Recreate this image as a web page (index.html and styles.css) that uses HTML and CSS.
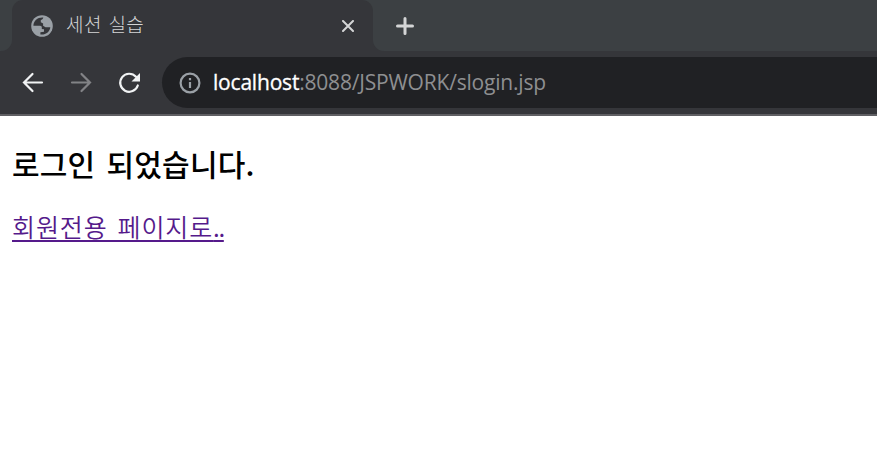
FILE: index.html
```html
<!DOCTYPE html>
<html lang="ko">
<head>
<meta charset="utf-8">
<title>세션 실습</title>
<link rel="stylesheet" href="styles.css">
</head>
<body>
<header class="browser">
  <div class="tabs">
    <div class="strip strip-left"></div>
    <div class="tab">
      <svg class="globe" viewBox="0 0 22 22"><circle cx="11" cy="11" r="10.8" fill="#9aa0a6"/><path fill="#35363a" d="M2.4 10.8C2.5 5.5 7 2 12.3 2.5c-.2 1.6-1.4 2.2-2.5 2.5v2.2l2.3 1.2v2.4l2.4 1.4h4.8c-.3 4.3-4.2 7.8-9.9 7.3v-2.2l3.6-.5v-2.5l-2.2-.4v-2.2c-1-1.2-2.2-.9-3.5-.9z"/></svg>
      <span class="tab-title">세션 실습</span>
      <svg class="close" viewBox="0 0 12 12"><path d="M1 1l10 10M11 1L1 11"/></svg>
    </div>
    <div class="strip strip-right">
      <svg class="plus" viewBox="0 0 18 18"><path d="M9 1.5v15M1.5 9h15"/></svg>
    </div>
  </div>
  <div class="toolbar">
    <svg class="nav" viewBox="0 0 22 22"><path d="M20 10.5H2M10.5 2L2 10.5l8.5 8.5"/></svg>
    <svg class="nav dim" viewBox="0 0 22 22"><path d="M2 10.5h18M11.5 2l8.5 8.5-8.5 8.5"/></svg>
    <svg class="nav" viewBox="0 0 22 22"><path d="M19.8 13.5A9 9 0 1 1 18 4.8"/><path class="tip" d="M22 1v8.5h-8.5z"/></svg>
    <div class="address">
      <svg class="info" viewBox="0 0 22 22"><circle cx="11" cy="11" r="9.4"/><path d="M11 10v6M11 6v2.2"/></svg>
      <span class="host">localhost</span><span class="path">:8088/JSPWORK/slogin.jsp</span>
    </div>
  </div>
</header>
<main>
  <h3>로그인 되었습니다.</h3>
  <a href="#">회원전용 페이지로<span class="dots">..</span></a>
</main>
</body>
</html>
```
FILE: styles.css
```css
* { box-sizing: border-box; }
body { margin: 0; height: 475px; overflow: hidden; background: #fff; font-family: "Noto Sans CJK KR", sans-serif; }
svg { display: block; flex: none; fill: none; stroke-linecap: round; }
.browser { height: 116px; background: #35363a; border-bottom: 2px solid #5f5f63; }
.tabs { display: flex; height: 51px; background: linear-gradient(#3c4043 0 20px, #35363a 20px); }
.strip { background: #3c4043; }
.strip-left { width: 12px; border-bottom-right-radius: 11px; }
.strip-right { flex: 1; border-bottom-left-radius: 11px; padding: 17px 0 0 23px; }
.tab { width: 361px; display: flex; align-items: center; padding-left: 19px; border-radius: 11px 11px 0 0; background: #35363a; }
.globe { width: 22px; height: 22px; stroke: none; }
.tab-title { margin-left: 13px; width: 276px; padding-bottom: 3px; font-size: 19px; font-weight: 300; line-height: 24px; letter-spacing: .4px; word-spacing: 1px; color: #d4d5d6; white-space: nowrap; }
.close { width: 12px; height: 12px; stroke: #d4d5d6; stroke-width: 2; }
.plus { width: 18px; height: 18px; stroke: #d4d5d6; stroke-width: 3; }
.toolbar { display: flex; align-items: center; height: 63px; padding-left: 22px; }
.nav { width: 22px; height: 22px; margin-right: 26px; stroke: #f1f3f4; stroke-width: 2.2; }
.dim { stroke: #828386; }
.tip { fill: #f1f3f4; stroke: none; }
.address { display: flex; align-items: center; width: 715px; height: 51px; margin-left: -4px; padding-left: 17px; border-radius: 26px 0 0 26px; background: #202124; font: 21px/30px "Open Sans", "Noto Sans", sans-serif; letter-spacing: -.2px; white-space: nowrap; }
.info { width: 22px; height: 22px; margin-right: 12px; stroke: #9aa0a6; stroke-width: 2.2; stroke-linecap: butt; }
.host, .path { padding-bottom: 1px; }
.host { color: #fff; -webkit-text-stroke: .3px #fff; }
.path { color: #8e8f91; }
main { padding: 26px 12px 0; }
h3 { margin: 0; font-size: 30px; line-height: 42px; font-weight: 500; letter-spacing: .2px; word-spacing: 2.5px; color: #000; }
a { display: inline-block; margin-top: 24px; font-size: 25px; line-height: 36px; font-weight: 350; letter-spacing: .9px; word-spacing: 2px; color: #551a8b; text-underline-offset: 3px; text-decoration-thickness: 2px; }
.dots { letter-spacing: -1.4px; }
```
